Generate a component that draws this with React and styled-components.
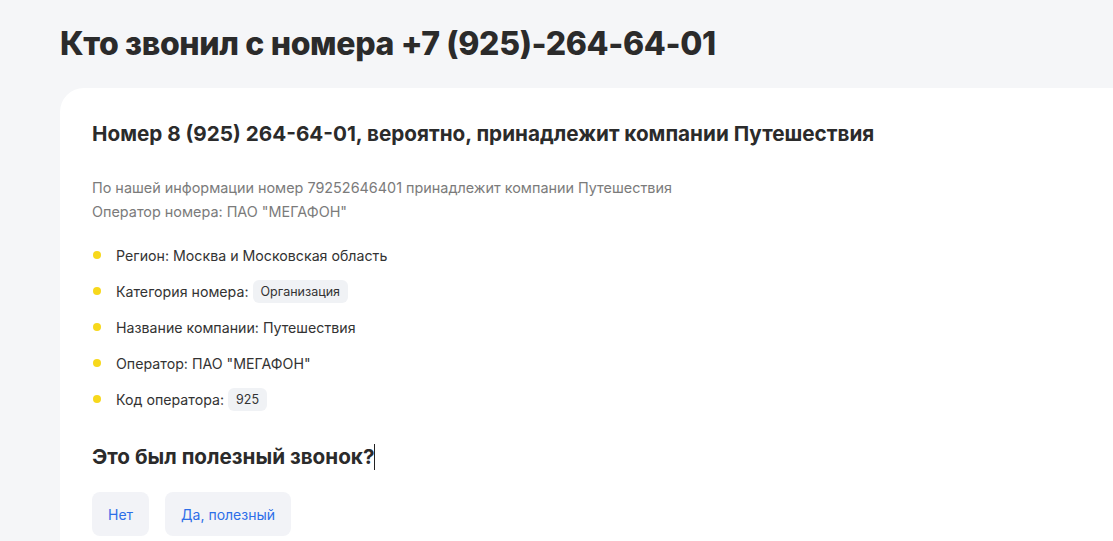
import styled, { createGlobalStyle } from "styled-components";

const GlobalStyle = createGlobalStyle`
  html, body {
    margin: 0;
    padding: 0;
    background: #f5f6f8;
    font-family: Inter, Roboto, "Noto Sans", sans-serif;
    color: #2b2b2b;
  }
`;

const items = [
  { label: "Регион:", value: "Москва и Московская область" },
  { label: "Категория номера:", chip: "Организация" },
  { label: "Название компании:", value: "Путешествия" },
  { label: "Оператор:", value: 'ПАО "МЕГАФОН"' },
  { label: "Код оператора:", chip: "925" },
];

export default function App() {
  return (
    <>
      <GlobalStyle />
      <Page>
        <Title>Кто звонил с номера +7 (925)-264-64-01</Title>
        <Card>
          <CardTitle>
            Номер 8 (925) 264-64-01, вероятно, принадлежит компании Путешествия
          </CardTitle>
          <Info>
            По нашей информации номер 79252646401 принадлежит компании Путешествия
            <br />
            Оператор номера: ПАО "МЕГАФОН"
          </Info>
          <List>
            {items.map((it) => (
              <Item key={it.label}>
                {it.label} {it.value}
                {it.chip && <Chip>{it.chip}</Chip>}
              </Item>
            ))}
          </List>
          <Question>
            Это был полезный звонок?
            <Caret />
          </Question>
          <Buttons>
            <Button>Нет</Button>
            <Button>Да, полезный</Button>
          </Buttons>
        </Card>
      </Page>
    </>
  );
}

const Page = styled.div`
  padding: 24px 0 0 60px;
  overflow: hidden;
`;

const Title = styled.h1`
  margin: 0 0 24px;
  font-size: 32px;
  line-height: 40px;
  font-weight: 800;
  letter-spacing: -0.35px;
  color: #2b2b2b;
`;

const Card = styled.div`
  background: #fff;
  border-radius: 24px 0 0 0;
  padding: 32px 32px 40px;
  min-height: 400px;
`;

const CardTitle = styled.h2`
  margin: 0 0 28px;
  font-size: 20.7px;
  line-height: 28px;
  font-weight: 700;
  color: #2b2b2b;
`;

const Info = styled.p`
  margin: 0 0 13px;
  font-size: 14.4px;
  line-height: 24px;
  color: #7b7b7b;
`;

const List = styled.ul`
  list-style: none;
  margin: 0 0 26px;
  padding: 0;
`;

const Item = styled.li`
  display: flex;
  align-items: center;
  height: 36px;
  font-size: 14.2px;
  color: #333;
  padding-left: 24px;
  position: relative;

  &::before {
    content: "";
    position: absolute;
    left: 1px;
    top: 50%;
    width: 8px;
    height: 8px;
    margin-top: -4px;
    border-radius: 50%;
    background: #f7d81c;
  }
`;

const Chip = styled.span`
  margin-left: 4px;
  padding: 4px 8px;
  border-radius: 6px;
  background: #f0f2f5;
  font-size: 12.5px;
  line-height: 15px;
  color: #333;
`;

const Question = styled.h3`
  margin: 0 0 21px;
  font-size: 20.7px;
  line-height: 28px;
  font-weight: 700;
  color: #2b2b2b;
  display: flex;
  align-items: center;
`;

const Caret = styled.span`
  display: inline-block;
  width: 1px;
  height: 26px;
  background: #222;
`;

const Buttons = styled.div`
  display: flex;
  gap: 16px;
`;

const Button = styled.button`
  border: none;
  background: #f2f3f7;
  border-radius: 8px;
  padding: 0 16px;
  height: 44px;
  font-family: inherit;
  font-size: 14px;
  color: #2d6ee8;
  cursor: pointer;
`;
